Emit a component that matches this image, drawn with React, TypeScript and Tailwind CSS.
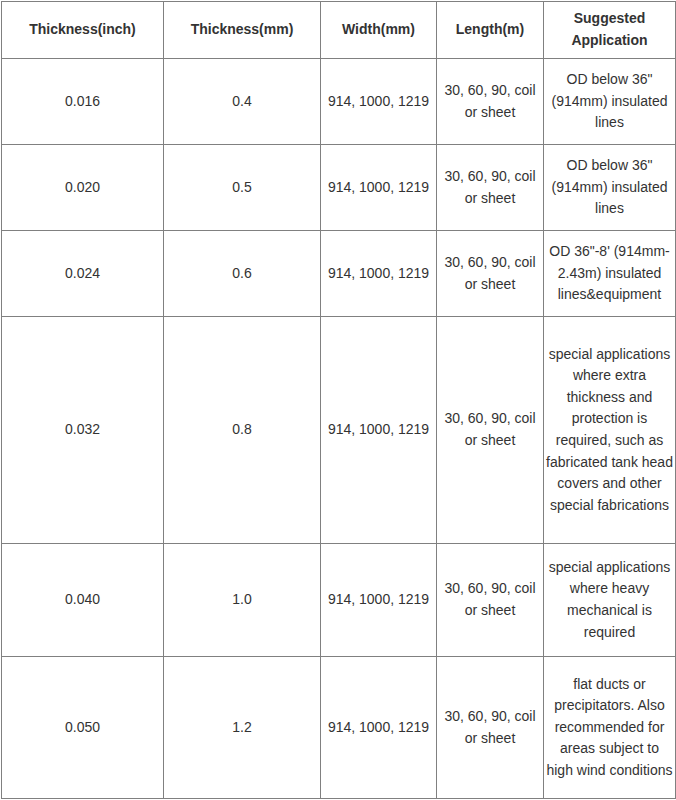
const rows = [
  { inch: '0.016', mm: '0.4', app: 'OD below 36" (914mm) insulated lines', h: 'h-[86px]' },
  { inch: '0.020', mm: '0.5', app: 'OD below 36" (914mm) insulated lines', h: 'h-[86px]' },
  { inch: '0.024', mm: '0.6', app: 'OD 36"-8\' (914mm-2.43m) insulated lines&equipment', h: 'h-[86px]' },
  {
    inch: '0.032',
    mm: '0.8',
    app: 'special applications where extra thickness and protection is required, such as fabricated tank head covers and other special fabrications',
    h: 'h-[227px]',
  },
  { inch: '0.040', mm: '1.0', app: 'special applications where heavy mechanical is required', h: 'h-[113px]' },
  {
    inch: '0.050',
    mm: '1.2',
    app: 'flat ducts or precipitators. Also recommended for areas subject to high wind conditions',
    h: 'h-[142px]',
  },
];

export default function App() {
  const cell = 'border border-[#808080] px-px text-center align-middle';
  return (
    <div className="bg-white p-px font-['Liberation_Sans',Arial,sans-serif] text-[14px] leading-[21.6px] text-[#333]">
      <table className="w-[674px] table-fixed border-collapse">
        <colgroup>
          <col className="w-[162px]" />
          <col className="w-[157px]" />
          <col className="w-[116px]" />
          <col className="w-[107px]" />
          <col className="w-[132px]" />
        </colgroup>
        <thead>
          <tr className="h-[57px] font-bold">
            <th className={cell}>Thickness(inch)</th>
            <th className={cell}>Thickness(mm)</th>
            <th className={cell}>Width(mm)</th>
            <th className={cell}>Length(m)</th>
            <th className={cell}>
              Suggested
              <br />
              Application
            </th>
          </tr>
        </thead>
        <tbody>
          {rows.map((r) => (
            <tr key={r.inch} className={r.h}>
              <td className={cell}>{r.inch}</td>
              <td className={cell}>{r.mm}</td>
              <td className={cell}>914, 1000, 1219</td>
              <td className={cell}>30, 60, 90, coil or sheet</td>
              <td className={cell}>{r.app}</td>
            </tr>
          ))}
        </tbody>
      </table>
    </div>
  );
}
